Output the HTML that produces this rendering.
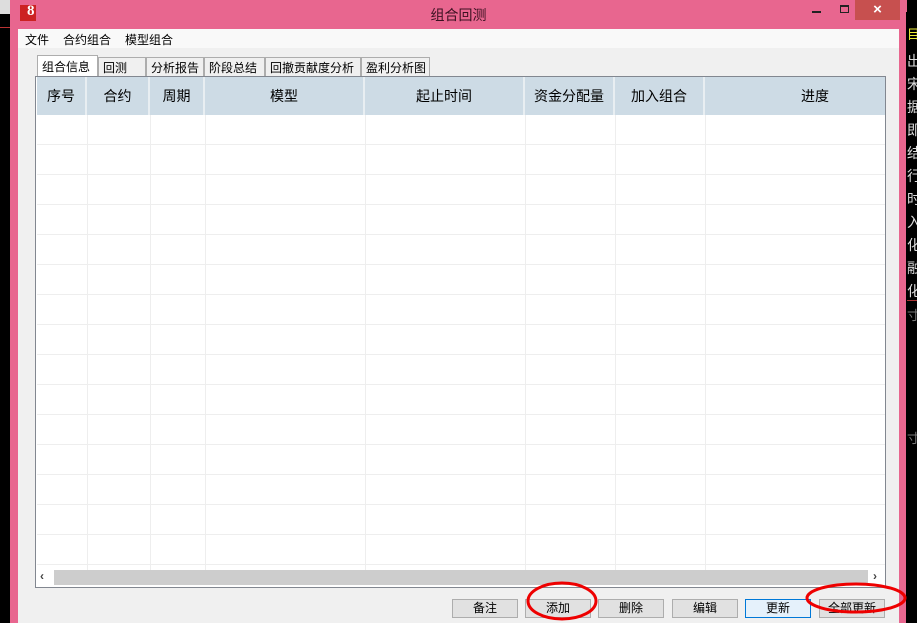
<!DOCTYPE html>
<html><head><meta charset="utf-8"><style>
*{margin:0;padding:0;box-sizing:border-box}
body{width:917px;height:623px;overflow:hidden;background:#000;position:relative;font-family:"Liberation Sans","Noto Sans CJK SC","WenQuanYi Zen Hei",sans-serif;font-size:12px;color:#000}
.abs{position:absolute}
.frame{left:10px;top:0;width:897px;height:623px;background:#e8668f}
.client{left:18px;top:29px;width:881px;height:594px;background:#f0f0f0}
.menu{left:18px;top:29px;width:881px;height:19px;background:#f9f9f9}
.menu span{position:absolute;top:2px;font-size:12px}
.tab{position:absolute;top:57px;height:19px;border:1px solid #adadad;border-bottom:none;background:#f0f0f0;font-size:12px;padding:1px 0 0 4px}
.tab.sel{top:55px;height:22px;background:#fff;padding-top:2px}
.table{left:35px;top:76px;width:851px;height:512px;border:1px solid #828790;background:#fff}
.hdr{left:37px;top:77px;width:848px;height:38px;background:#cddbe5}
.hc{position:absolute;top:0;height:38px;line-height:38px;text-align:center;font-size:14px;border-right:2px solid #e8eef2}
.vl{position:absolute;top:115px;width:1px;height:455px;background:#eeeeee}
.hl{position:absolute;left:37px;width:848px;height:1px;background:#eeeeee}
.sb{left:37px;top:570px;width:848px;height:16px;background:#fff}
.btn{position:absolute;top:599px;height:19px;border:1px solid #adadad;background:#e1e1e1;text-align:center;line-height:17px;font-size:12px}
</style></head><body>
<div class="abs" style="left:0;top:0;width:10px;height:14px;background:#ddd"></div>
<div class="abs" style="left:0;top:27px;width:10px;height:1px;background:#b33"></div>
<div class="abs frame"></div>
<div class="abs" style="left:20px;top:5px;width:16px;height:16px;background:#c22;"></div>
<div class="abs" style="left:27px;top:3px;color:#fff;font-size:15px;font-weight:bold;font-family:'Liberation Serif',serif">8</div>
<div class="abs" style="left:0;width:917px;top:5px;text-align:center;color:#3a1020;font-size:14px">组合回测</div>
<div class="abs" style="left:812px;top:11px;width:9px;height:2px;background:#222"></div>
<div class="abs" style="left:840px;top:5px;width:9px;height:8px;border:1px solid #222;border-top-width:2px"></div>
<div class="abs" style="left:855px;top:0;width:45px;height:20px;background:#c7504f;color:#fff;text-align:center;font-size:15px;line-height:19px;font-weight:bold">×</div>
<div class="abs" style="left:906px;top:12px;width:11px;height:611px;background:#000"></div>
<div class="abs" style="left:907px;top:24px;width:10px;height:16px;color:#ee3;font-size:13px;overflow:hidden">目</div>
<div class="abs" style="left:907px;top:50px;width:10px;height:250px;color:#ddd;font-size:14px;line-height:23px;overflow:hidden">出<br>宋<br>据<br>即<br>结<br>行<br>时<br>入<br>化<br>融<br>化</div>
<div class="abs" style="left:907px;top:300px;width:10px;height:1px;background:#a33"></div>
<div class="abs" style="left:907px;top:305px;color:#777;font-size:13px">寸</div>
<div class="abs" style="left:907px;top:428px;color:#777;font-size:13px">寸</div>
<div class="abs client"></div>
<div class="abs menu"><span style="left:7px">文件</span><span style="left:45px">合约组合</span><span style="left:107px">模型组合</span></div>
<div class="tab" style="left:98px;width:48px">回测</div>
<div class="tab" style="left:146px;width:58px">分析报告</div>
<div class="tab" style="left:204px;width:61px">阶段总结</div>
<div class="tab" style="left:265px;width:96px">回撤贡献度分析</div>
<div class="tab" style="left:361px;width:69px">盈利分析图</div>
<div class="tab sel" style="left:37px;width:61px">组合信息</div>
<div class="abs table"></div>
<div class="abs hdr">
<div class="hc" style="left:0;width:50px">序号</div>
<div class="hc" style="left:50px;width:63px">合约</div>
<div class="hc" style="left:113px;width:55px">周期</div>
<div class="hc" style="left:168px;width:160px">模型</div>
<div class="hc" style="left:328px;width:160px">起止时间</div>
<div class="hc" style="left:488px;width:90px">资金分配量</div>
<div class="hc" style="left:578px;width:90px">加入组合</div>
<div class="hc" style="left:668px;width:220px;border:none">进度</div>
</div>
<div class="vl" style="left:87px"></div><div class="vl" style="left:150px"></div><div class="vl" style="left:205px"></div><div class="vl" style="left:365px"></div><div class="vl" style="left:525px"></div><div class="vl" style="left:615px"></div><div class="vl" style="left:705px"></div>
<div class="hl" style="top:144px"></div><div class="hl" style="top:174px"></div><div class="hl" style="top:204px"></div><div class="hl" style="top:234px"></div><div class="hl" style="top:264px"></div><div class="hl" style="top:294px"></div><div class="hl" style="top:324px"></div><div class="hl" style="top:354px"></div><div class="hl" style="top:384px"></div><div class="hl" style="top:414px"></div><div class="hl" style="top:444px"></div><div class="hl" style="top:474px"></div><div class="hl" style="top:504px"></div><div class="hl" style="top:534px"></div><div class="hl" style="top:564px"></div>
<div class="abs sb"></div>
<div class="abs" style="left:54px;top:570px;width:814px;height:15px;background:#cdcdcd"></div>
<div class="abs" style="left:40px;top:569px;font-size:12px;color:#444;font-weight:bold">‹</div>
<div class="abs" style="left:873px;top:569px;font-size:12px;color:#444;font-weight:bold">›</div>
<div class="btn" style="left:452px;width:66px">备注</div>
<div class="btn" style="left:525px;width:66px">添加</div>
<div class="btn" style="left:598px;width:66px">删除</div>
<div class="btn" style="left:672px;width:66px">编辑</div>
<div class="btn" style="left:745px;width:66px;border-color:#0078d7;background:#e5f1fb">更新</div>
<div class="btn" style="left:819px;width:66px">全部更新</div>
<svg class="abs" style="left:0;top:0" width="917" height="623">
<ellipse cx="562" cy="601" rx="34" ry="18" fill="none" stroke="#e00" stroke-width="3"/>
<ellipse cx="856" cy="598" rx="49" ry="14" fill="none" stroke="#e00" stroke-width="3"/>
</svg>
</body></html>
